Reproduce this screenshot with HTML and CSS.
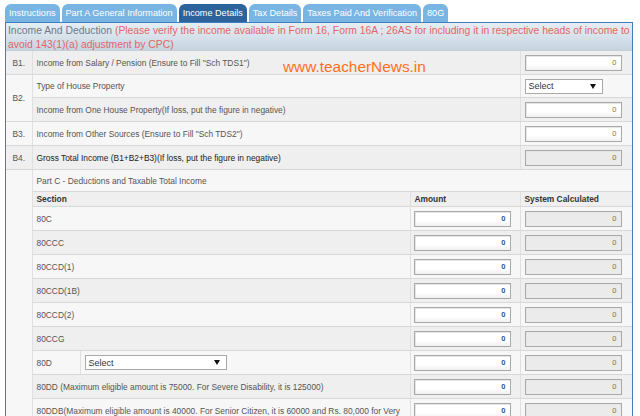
FILE: index.html
```html
<!DOCTYPE html>
<html>
<head>
<meta charset="utf-8">
<link rel="stylesheet" href="styles.css">
</head>
<body>
<div class="page">
  <ul class="tabs">
    <li class="tab">Instructions</li>
    <li class="tab">Part A General Information</li>
    <li class="tab active">Income Details</li>
    <li class="tab">Tax Details</li>
    <li class="tab">Taxes Paid And Verification</li>
    <li class="tab">80G</li>
  </ul>
  <div class="panel">
    <div class="panel-head"><span class="title">Income And Deduction</span> <span class="note">(Please verify the income available in Form 16, Form 16A ; 26AS for including it in respective heads of income to<br>avoid 143(1)(a) adjustment by CPC)</span></div>
    <div class="watermark">www.teacherNews.in</div>
    <table class="grid">
      <colgroup>
        <col class="c-no"><col class="c-seca"><col class="c-secb"><col class="c-amt"><col class="c-val">
      </colgroup>
      <tr class="dark">
        <td class="no">B1.</td>
        <td colspan="3">Income from Salary / Pension (Ensure to Fill "Sch TDS1")</td>
        <td class="val"><input class="box" value="0"></td>
      </tr>
      <tr class="light short">
        <td class="no mid" rowspan="2">B2.</td>
        <td colspan="3">Type of House Property</td>
        <td class="val"><div class="select sel-sm"><span>Select</span><svg width="6" height="5" viewBox="0 0 6 5"><path d="M0 0H6L3 5Z" fill="#111"/></svg></div></td>
      </tr>
      <tr class="dark">
        <td colspan="3">Income from One House Property(If loss, put the figure in negative)</td>
        <td class="val"><input class="box" value="0"></td>
      </tr>
      <tr class="light">
        <td class="no">B3.</td>
        <td colspan="3">Income from Other Sources (Ensure to Fill "Sch TDS2")</td>
        <td class="val"><input class="box" value="0"></td>
      </tr>
      <tr class="dark">
        <td class="no">B4.</td>
        <td colspan="3" class="strong">Gross Total Income (B1+B2+B3)(If loss, put the figure in negative)</td>
        <td class="val"><input class="box sys" value="0" readonly></td>
      </tr>
      <tr class="light partc">
        <td class="no side" rowspan="12"></td>
        <td colspan="4">Part C - Deductions and Taxable Total Income</td>
      </tr>
      <tr class="dark head">
        <td colspan="2">Section</td>
        <td>Amount</td>
        <td>System Calculated</td>
      </tr>
      <tr class="light">
        <td colspan="2">80C</td>
        <td class="amt"><input class="box blue" value="0"></td>
        <td class="val"><input class="box sys" value="0" readonly></td>
      </tr>
      <tr class="dark">
        <td colspan="2">80CCC</td>
        <td class="amt"><input class="box blue" value="0"></td>
        <td class="val"><input class="box sys" value="0" readonly></td>
      </tr>
      <tr class="light">
        <td colspan="2">80CCD(1)</td>
        <td class="amt"><input class="box blue" value="0"></td>
        <td class="val"><input class="box sys" value="0" readonly></td>
      </tr>
      <tr class="dark">
        <td colspan="2">80CCD(1B)</td>
        <td class="amt"><input class="box blue" value="0"></td>
        <td class="val"><input class="box sys" value="0" readonly></td>
      </tr>
      <tr class="light">
        <td colspan="2">80CCD(2)</td>
        <td class="amt"><input class="box blue" value="0"></td>
        <td class="val"><input class="box sys" value="0" readonly></td>
      </tr>
      <tr class="dark">
        <td colspan="2">80CCG</td>
        <td class="amt"><input class="box blue" value="0"></td>
        <td class="val"><input class="box sys" value="0" readonly></td>
      </tr>
      <tr class="light">
        <td>80D</td>
        <td><div class="select sel-lg"><span>Select</span><svg width="6" height="5" viewBox="0 0 6 5"><path d="M0 0H6L3 5Z" fill="#111"/></svg></div></td>
        <td class="amt"><input class="box blue" value="0"></td>
        <td class="val"><input class="box sys" value="0" readonly></td>
      </tr>
      <tr class="dark">
        <td colspan="2">80DD (Maximum eligible amount is 75000. For Severe Disability, it is 125000)</td>
        <td class="amt"><input class="box blue" value="0"></td>
        <td class="val"><input class="box sys" value="0" readonly></td>
      </tr>
      <tr class="light">
        <td colspan="2">80DDB(Maximum eligible amount is 40000. For Senior Citizen, it is 60000 and Rs. 80,000 for Very</td>
        <td class="amt"><input class="box blue" value="0"></td>
        <td class="val"><input class="box sys" value="0" readonly></td>
      </tr>
    </table>
  </div>
</div>
</body>
</html>
```

FILE: styles.css
```css
html, body {
  margin: 0;
  padding: 0;
  background: #ffffff;
  overflow: hidden;
}
body {
  font-family: "Liberation Sans", Arial, sans-serif;
  width: 640px;
  height: 416px;
}
.page {
  padding: 4px 0 0 5px;
}
.tabs {
  list-style: none;
  margin: 0;
  padding: 0;
  display: flex;
  gap: 2px;
  height: 18px;
}
.tab {
  background: #79b5e3;
  color: #ffffff;
  font-size: 9.1px;
  line-height: 18px;
  padding: 0 4px;
  border-radius: 6px 6px 0 0;
  white-space: nowrap;
}
.tab.active {
  background: #2c639c;
}
.panel {
  position: relative;
  width: 626px;
  border: 1px solid #3f7fc0;
  border-bottom: none;
  height: 400px;
}
.panel-head {
  height: 28px;
  padding: 1px 0 0 2px;
  background: linear-gradient(#e6edf3, #d9e3ec 45%, #c6d4e1);
  font-family: "Liberation Sans", Arial, sans-serif;
  font-size: 10.35px;
  line-height: 13.5px;
  border-bottom: 1px solid #c4cfd9;
  box-sizing: border-box;
  white-space: nowrap;
}
.title {
  color: #6b7b8e;
}
.note {
  color: #e36464;
}
.watermark {
  position: absolute;
  left: 277px;
  top: 35px;
  color: #ff6f21;
  font-size: 15.4px;
  font-family: "Liberation Sans", Arial, sans-serif;
}
.grid {
  width: 626px;
  table-layout: fixed;
  border-collapse: collapse;
  font-size: 8.4px;
  color: #555555;
}
.c-no { width: 26px; }
.c-seca { width: 48px; }
.c-secb { width: 330px; }
.c-amt { width: 110px; }
.c-val { width: 112px; }
.grid td {
  height: 23px;
  padding: 0 0 0 4px;
  border-bottom: 1px solid #d8d8d8;
  border-right: 1px solid #e0e0e0;
  vertical-align: middle;
  white-space: nowrap;
  overflow: hidden;
}
.grid td:last-child {
  border-right: none;
}
.grid tr.dark td { background: #efefef; }
.grid tr.light td { background: #f7f7f7; }
.grid tr.short td { height: 22px; }
.grid tr.partc td { height: 21px; }
.grid tr.head td {
  height: 14px;
  font-weight: bold;
  color: #333333;
}
.grid td.no {
  text-align: center;
  padding: 0;
  background: #f1f1f1;
}
.grid td.side {
  background: #f1f1f1;
  border-bottom: none;
}
.grid td.strong {
  color: #222222;
}
.grid td.val {
  padding-left: 4px;
}
.grid td.amt {
  padding-left: 3px;
}
.box {
  display: block;
  box-sizing: border-box;
  width: 97px;
  height: 16px;
  margin: 0;
  border: 1px solid #a9a9a9;
  background: linear-gradient(#ffffff, #ffffff 60%, #f1f1f1);
  box-shadow: inset 1px 1px 0 #e6e6e6;
  font-family: "Liberation Sans", Arial, sans-serif;
  font-size: 7.5px;
  text-align: right;
  padding: 0 4px 0 0;
  color: #9c6d3a;
  outline: none;
}
.box.blue {
  color: #2b5592;
  font-weight: bold;
}
.box.sys {
  background: #ebebeb;
  color: #8a6a3e;
}
.select {
  box-sizing: border-box;
  height: 15px;
  border: 1px solid #a9a9a9;
  background: #ffffff;
  display: flex;
  align-items: center;
  justify-content: space-between;
  padding: 0 6px 0 3px;
  font-size: 9px;
  color: #333333;
}
.sel-sm { width: 78px; }
.sel-lg { width: 142px; }
```
